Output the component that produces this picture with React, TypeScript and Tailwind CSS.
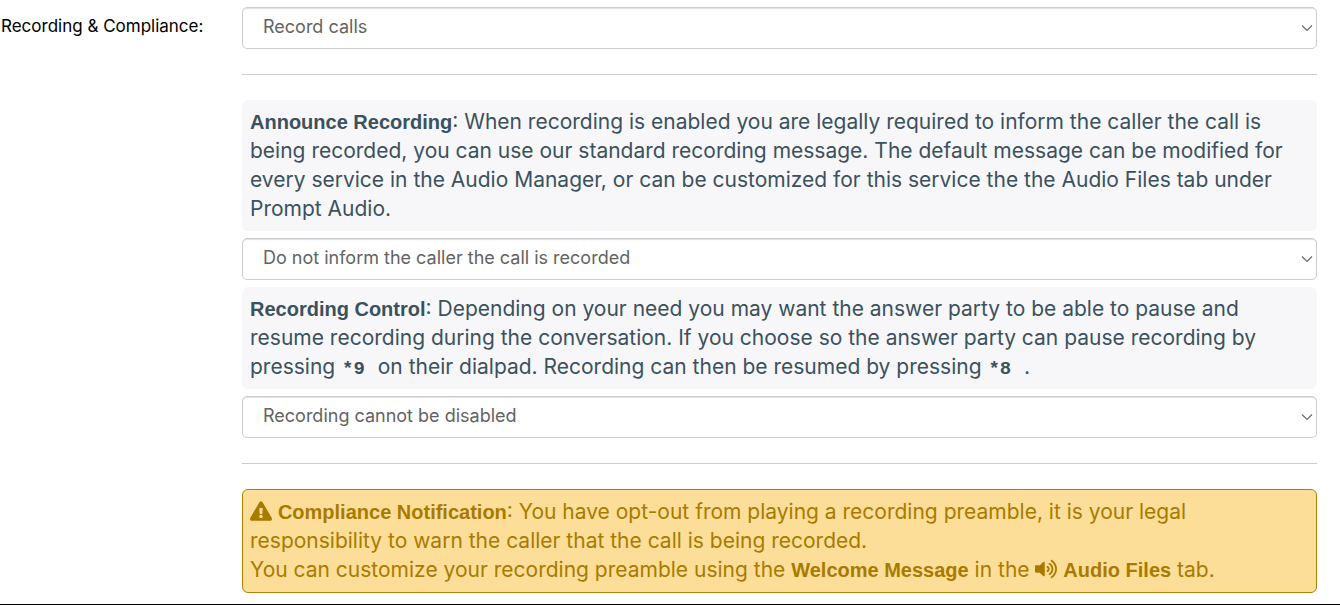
import type { ReactNode } from "react";
import { FaExclamationTriangle, FaVolumeUp } from "react-icons/fa";

type SelectFieldProps = {
  id: string;
  label?: string;
  options: string[];
};

function SelectField({ id, label, options }: SelectFieldProps) {
  return (
    <div className="relative">
      <select
        id={id}
        aria-label={label}
        className="block h-[42px] w-full appearance-none rounded-[5px] border border-[#cccccc] bg-white pr-8 pb-1 pl-5 text-[18px] text-[#636363] shadow-[inset_0_1px_1px_rgba(0,0,0,0.12)]"
      >
        {options.map((option) => (
          <option key={option}>{option}</option>
        ))}
      </select>
      <svg
        aria-hidden="true"
        viewBox="0 0 12 8"
        className="pointer-events-none absolute top-[17px] right-1 h-2 w-3"
        fill="none"
        stroke="#6b6b6b"
        strokeWidth="1.2"
      >
        <path d="M1 1.5 6 6.5 11 1.5" />
      </svg>
    </div>
  );
}

function Strong({ children }: { children: ReactNode }) {
  return <strong className="font-['Liberation_Sans',Arial,sans-serif] text-[20px] leading-none font-bold">{children}</strong>;
}

function Note({ children }: { children: ReactNode }) {
  return (
    <p className="my-[7px] rounded-md bg-[#f7f7fa] px-2 pt-[7px] pb-2 text-[21px] leading-[29px] text-[#3b515d]">
      {children}
    </p>
  );
}

function DialCode({ children }: { children: ReactNode }) {
  return (
    <code className="px-px font-['Liberation_Mono',monospace] text-[19px] leading-none font-bold">{children}</code>
  );
}

export default function App() {
  return (
    <main className="border-b border-black bg-white pt-[7px] pb-[11px] font-[Inter,sans-serif]">
      <div className="flex pr-[23px]">
        <label htmlFor="recording" className="w-[242px] shrink-0 pt-[7px] pl-px text-[17px] leading-6 text-black">
          Recording &amp; Compliance:
        </label>
        <div className="min-w-0 flex-1">
          <SelectField id="recording" options={["Record calls", "Do not record calls"]} />
          <hr className="my-[25px] border-[#cccccc]" />
          <Note>
            <Strong>Announce Recording</Strong>: When recording is enabled you are legally required to inform the
            caller the call is being recorded, you can use our standard recording message. The default message can be
            modified for every service in the Audio Manager, or can be customized for this service the the Audio Files
            tab under Prompt Audio.
          </Note>
          <SelectField
            id="announce"
            label="Announce Recording"
            options={["Do not inform the caller the call is recorded", "Inform the caller the call is recorded"]}
          />
          <Note>
            <Strong>Recording Control</Strong>: Depending on your need you may want the answer party to be able to
            pause and resume recording during the conversation. If you choose so the answer party can pause recording
            by pressing <DialCode>*9</DialCode>&nbsp; on their dialpad. Recording can then be resumed by pressing{" "}
            <DialCode>*8</DialCode>&nbsp; .
          </Note>
          <SelectField
            id="control"
            label="Recording Control"
            options={["Recording cannot be disabled", "Recording can be paused"]}
          />
          <hr className="my-[25px] border-[#cccccc]" />
          <div
            role="alert"
            className="rounded-md border border-[#b08000] bg-[#fcde98] px-[7px] pt-[7px] pb-2 text-[21px] leading-[29px] text-[#a87b00]"
          >
            <p>
              <FaExclamationTriangle className="inline h-5 w-[22px] align-[-2px]" />{" "}
              <Strong>Compliance Notification</Strong>: You have opt-out from playing a recording preamble, it is your
              legal responsibility to warn the caller that the call is being recorded.
            </p>
            <p>
              You can customize your recording preamble using the <Strong>Welcome Message</Strong> in the{" "}
              <FaVolumeUp className="inline h-5 w-[22px] align-[-2px]" /> <Strong>Audio Files</Strong> tab.
            </p>
          </div>
        </div>
      </div>
    </main>
  );
}
